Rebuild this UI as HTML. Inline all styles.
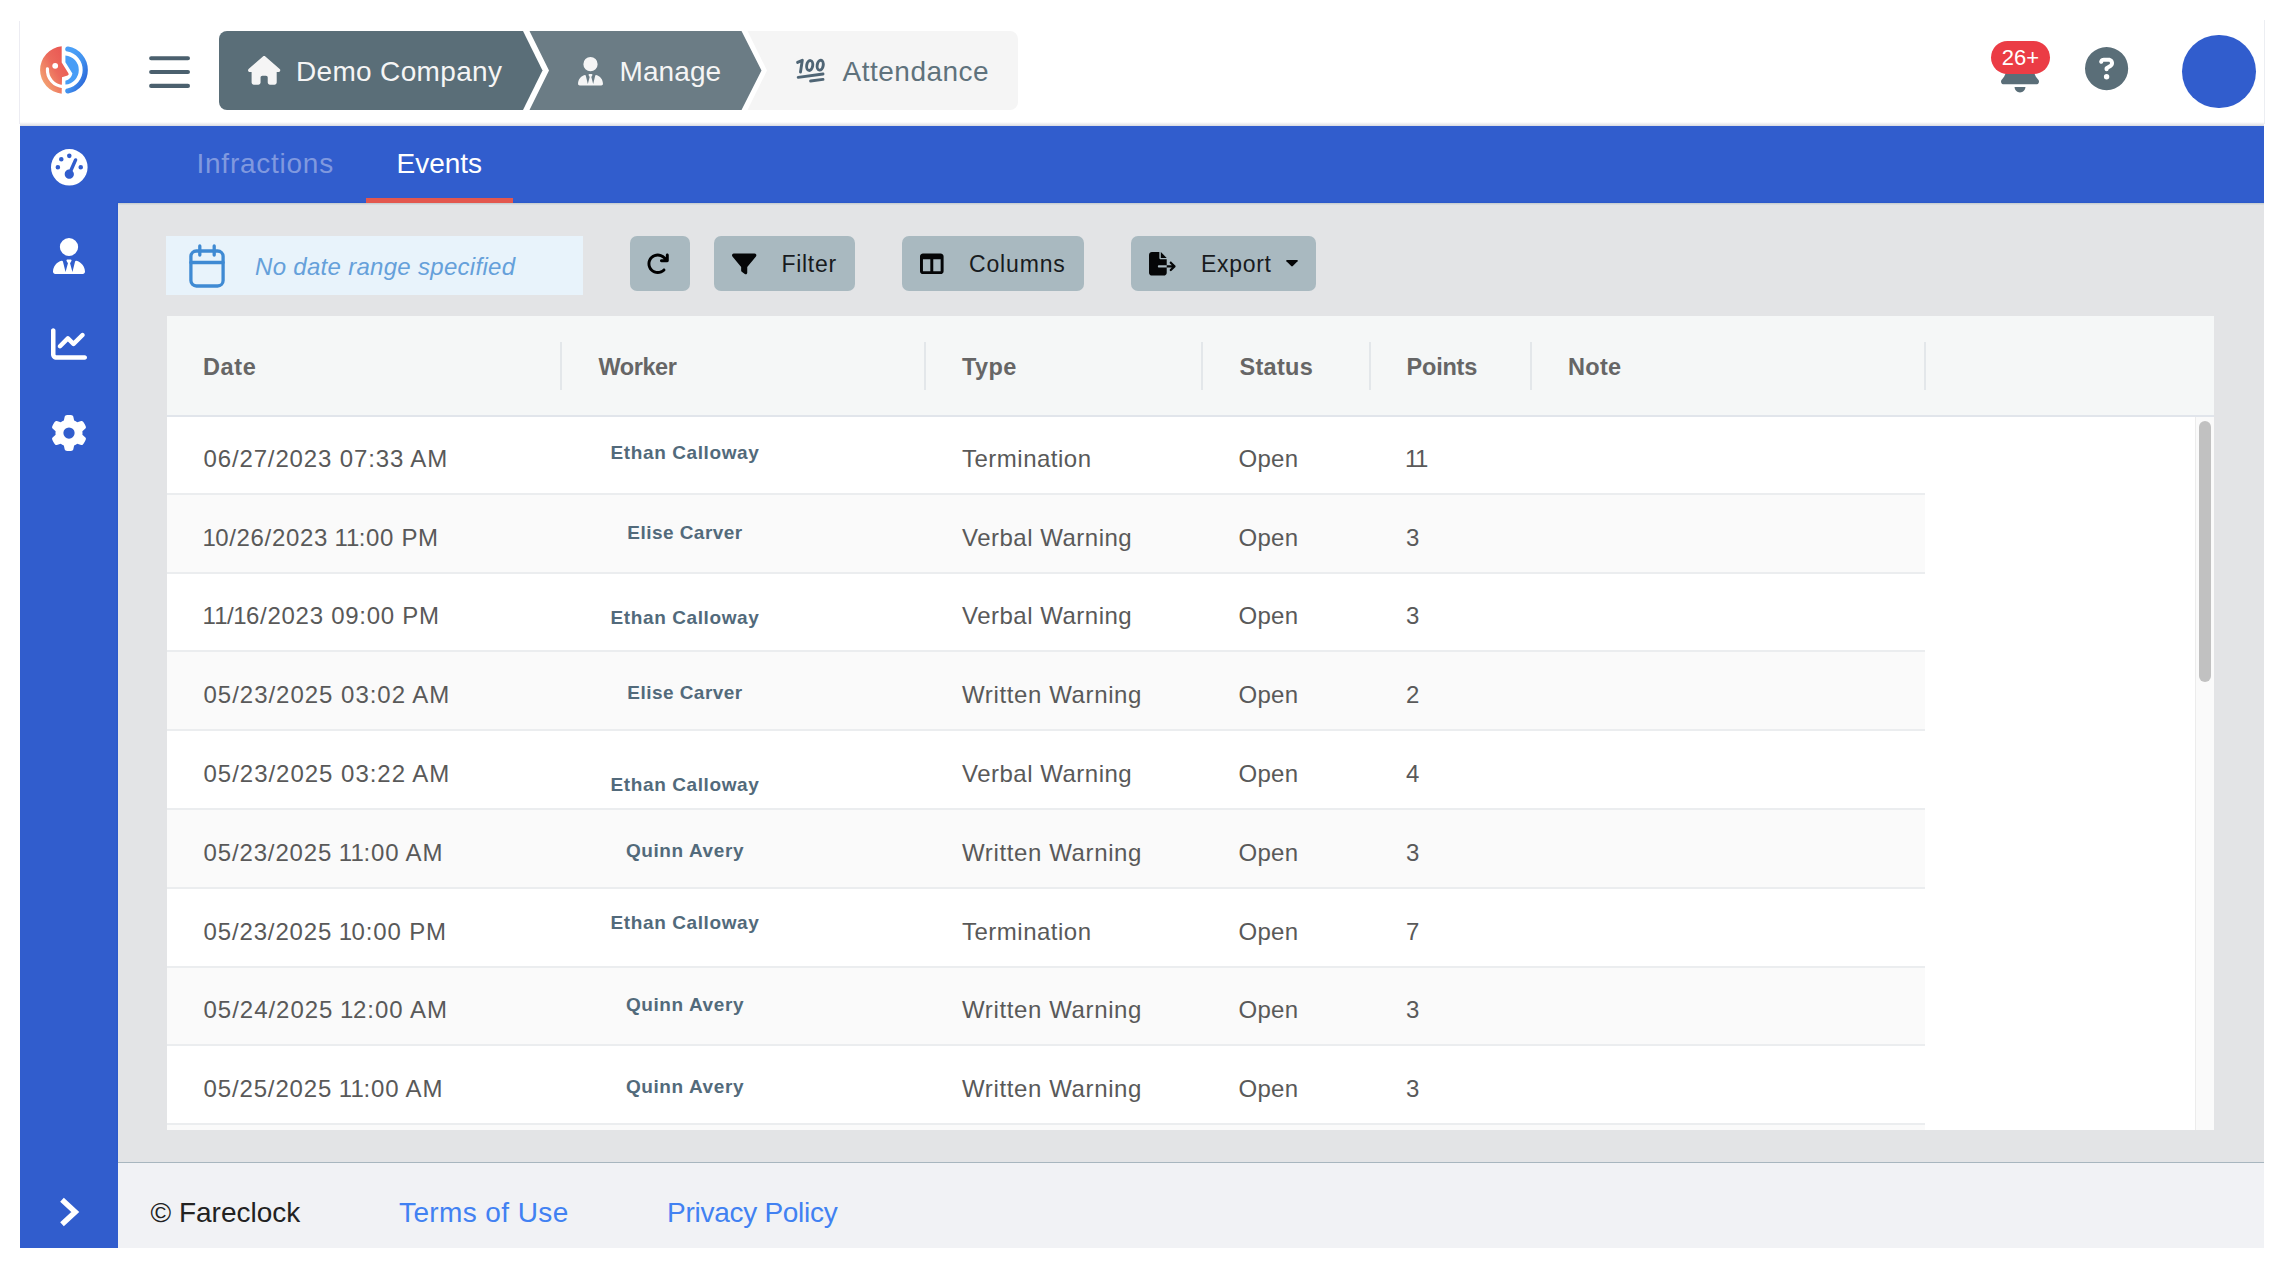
<!DOCTYPE html>
<html lang="en">
<head>
<meta charset="utf-8">
<title>Fareclock - Attendance Events</title>
<style>
*{box-sizing:border-box;margin:0;padding:0}
html,body{width:2288px;height:1268px;background:#fff;overflow:hidden}
body{position:relative;font-family:"Liberation Sans",sans-serif;color:#222}
.abs{position:absolute}
.t{position:absolute;white-space:nowrap;line-height:1}
svg{position:absolute;display:block;overflow:visible}
/* header */
#hdr{left:20px;top:20px;width:2244px;height:106px;background:#fff}
#hdrshadow{left:20px;top:122px;width:2244px;height:4px;background:linear-gradient(#fff,#d9dbe2)}
#edgeL{left:19px;top:21px;width:1px;height:103px;background:#ececf2}
#edgeR{left:2264px;top:20px;width:1px;height:104px;background:#eceef2}
/* sidebar + tabs */
#side{left:20px;top:126px;width:98px;height:1122px;background:#315dcd}
#tabs{left:118px;top:126px;width:2146px;height:77px;background:#315dcd}
#tabshadow{left:118px;top:203px;width:2146px;height:2px;background:linear-gradient(#c2c9cc,#dfe1e3)}
#tabdark{left:117px;top:201px;width:2147px;height:2px;background:linear-gradient(#315dcd,#2a58c9)}
#sidedark{left:116px;top:203px;width:2px;height:959px;background:linear-gradient(90deg,#315dcd,#2a58c9)}
#content{left:118px;top:203px;width:2146px;height:959px;background:#e3e4e6}
#footer{left:118px;top:1161.500px;width:2146px;height:86.500px;background:#f1f2f5;border-top:1.500px solid #a8b6bf}
.tab{font-size:28px}
.bc{font-size:28px}
#uline{left:366px;top:198px;width:147.200px;height:4.700px;background:#e3574e}
/* toolbar */
#daterange{left:166px;top:235.500px;width:417px;height:59.500px;background:#e8f3fb}
.btn{position:absolute;top:235.700px;height:55.500px;background:#a9b9c0;border-radius:7px}
.bt{font-size:23px;color:#181b1e;letter-spacing:.7px}
/* table */
#grid{left:167px;top:316.400px;width:2047px;height:813.600px;background:#fff}
#ghead{left:167px;top:316.400px;width:2047px;height:100.300px;background:#f5f7f7;border-bottom:2px solid #e1e5eb}
.hsep{position:absolute;top:342px;width:2px;height:48px;background:#e3e7ea}
.ht{font-size:23.5px;font-weight:bold;color:#666;top:355.700px}
.row{position:absolute;left:167px;width:1758px;border-bottom:2px solid #ebedef}
.row.alt{background:#fafafa}
.c{font-size:24px;color:#595959}
.n{margin:0 -1.400px 0 -1px}
.n2{margin:0 -2px 0 -1.400px}
.w{font-size:19px;font-weight:bold;color:#526a7b;width:300px;left:535px;text-align:center}
#sbtrack{left:2195px;top:417px;width:19px;height:713px;background:#fafafa;border-left:1px solid #ececec}
#sbthumb{left:2199px;top:421px;width:12px;height:261px;border-radius:6px;background:#c1c1c1}
.ft{font-size:28px;top:1199px}
</style>
</head>
<body>
<div id="hdr" class="abs"></div>
<div id="hdrshadow" class="abs"></div>
<div id="edgeL" class="abs"></div>
<div id="edgeR" class="abs"></div>
<div id="side" class="abs"></div>
<div id="tabs" class="abs"></div>
<div id="content" class="abs"></div>
<div id="tabshadow" class="abs"></div>
<div id="tabdark" class="abs"></div>
<div id="sidedark" class="abs"></div>
<div id="footer" class="abs"></div>

<!-- HEADER-CONTENT -->
<!-- logo -->
<svg style="left:39.5px;top:46px" width="48" height="48" viewBox="0 0 48 48">
  <defs>
    <linearGradient id="lg1" x1="0.9" y1="0.15" x2="0.1" y2="0.9">
      <stop offset="0" stop-color="#ea5753"/><stop offset="0.45" stop-color="#ec6a5c"/><stop offset="1" stop-color="#f4aa74"/>
    </linearGradient>
    <linearGradient id="lg2" x1="0.2" y1="0.1" x2="0.9" y2="0.9">
      <stop offset="0" stop-color="#4a9ff7"/><stop offset="0.5" stop-color="#4292ef"/><stop offset="1" stop-color="#2c68d8"/>
    </linearGradient>
  </defs>
  <path d="M21.700 0.300A23.800 23.800 0 0 0 21.700 47.700L22 31.200L27.600 29.400Q29.400 28.800 28.400 27.200L21.700 16.600Z" fill="url(#lg1)"/>
  <circle cx="15.200" cy="19.800" r="2.900" fill="#fff"/>
  <path d="M7.450 22.900A16.600 16.600 0 0 0 23 40.550" fill="none" stroke="#fff" stroke-width="3.200" stroke-linecap="round"/>
  <path d="M27.800 3.050A21.300 21.300 0 0 1 27.800 44.950" fill="none" stroke="url(#lg2)" stroke-width="5.200" stroke-linecap="round"/>
  <path d="M25.400 9.450A14.600 14.600 0 0 1 25.400 38.550L25.400 34.800Q31.200 33.400 32.400 27.600L25.400 16.200Z" fill="#489df6"/>
</svg>
<!-- hamburger -->
<svg style="left:149px;top:54.600px" width="42" height="34" viewBox="0 0 42 34">
  <path d="M2.150 3.200H38.950M2.150 17H38.950M2.150 30.900H38.950" stroke="#4b606e" stroke-width="4.100" stroke-linecap="round" fill="none"/>
</svg>
<!-- breadcrumbs -->
<svg style="left:219px;top:31px" width="800" height="79" viewBox="0 0 800 79">
  <path d="M8 0H304L323.500 39.500L304 79H8A8 8 0 0 1 0 71V8A8 8 0 0 1 8 0Z" fill="#5a6e78"/>
  <path d="M310.500 0H522.500L542.500 39.500L522.500 79H310.500L330 39.500Z" fill="#6b7c85"/>
  <path d="M528.500 0H791A8 8 0 0 1 799 8V71A8 8 0 0 1 791 79H528.500L548 39.500Z" fill="#f5f5f5"/>
</svg>
<svg style="left:247.700px;top:56.300px" width="32.300" height="28.700" viewBox="0 0 576 512"><path fill="#f5f5f5" d="M575.800 255.500c0 18-15 32.100-32 32.100h-32l.7 160.200c0 2.700-.2 5.400-.5 8.100V472c0 22.100-17.900 40-40 40H456c-1.100 0-2.200 0-3.300-.1c-1.400 .1-2.800 .1-4.200 .1H416 392c-22.100 0-40-17.900-40-40V448 384c0-17.700-14.300-32-32-32H256c-17.700 0-32 14.300-32 32v64 24c0 22.100-17.900 40-40 40H160 128.100c-1.500 0-3-.1-4.500-.2c-1.200 .1-2.400 .2-3.600 .2H104c-22.100 0-40-17.900-40-40V360c0-.9 0-1.900 .1-2.800V287.600H32c-18 0-32-14-32-32.100c0-9 3-17 10-24L266.400 8c7-7 15-8 22-8s15 2 21 7L564.800 231.500c8 7 12 15 11 24z"/></svg>
<div class="t bc" style="left:296px;top:57.500px;color:#f5f5f5;letter-spacing:.33px">Demo Company</div>
<svg style="left:578px;top:57px" width="25" height="28.500" viewBox="0 0 448 512"><path fill="#f5f5f5" d="M224 256A128 128 0 1 1 224 0a128 128 0 1 1 0 256zM209.100 359.200l-18.600-31c-6.400-10.700 1.300-24.200 13.700-24.200H224h19.700c12.400 0 20.100 13.600 13.700 24.200l-18.600 31 33.400 123.900 36-146.900c2-8.100 9.800-13.400 17.900-11.300c70.100 17.600 121.900 81 121.900 156.400c0 17-13.800 30.700-30.700 30.700H285.500c-2.100 0-4-.4-5.800-1.100l.3 1.100H168l.3-1.100c-1.800 .7-3.800 1.100-5.800 1.100H30.700C13.800 512 0 498.200 0 481.300c0-75.500 51.900-138.900 121.900-156.400c8.100-2 15.900 3.300 17.900 11.300l36 146.900 33.400-123.900z"/></svg>
<div class="t bc" style="left:619.500px;top:57.500px;color:#f5f5f5;letter-spacing:.1px">Manage</div>
<!-- 100 icon -->
<svg style="left:785px;top:50px" width="50" height="42" viewBox="0 0 50 42">
  <g fill="none" stroke="#4f6575" stroke-width="2.900" stroke-linecap="round" stroke-linejoin="round">
    <path d="M12.600 12.400L17.300 10.200L15.500 22"/>
    <ellipse cx="24.700" cy="15.500" rx="3" ry="5" transform="rotate(9 24.700 15.500)"/>
    <ellipse cx="35.200" cy="15.200" rx="3" ry="5" transform="rotate(9 35.200 15.200)"/>
    <path d="M13.200 27.400L38 24"/>
    <path d="M25.600 31L38 29.400"/>
  </g>
</svg>
<div class="t bc" style="left:842.500px;top:57.500px;color:#5f727c;letter-spacing:.5px">Attendance</div>
<!-- bell + badge -->
<svg style="left:2001px;top:49.300px" width="38" height="43.400" viewBox="0 0 448 512"><path fill="#5a6e78" d="M224 0c-17.700 0-32 14.300-32 32V51.200C119 66 64 130.600 64 208v18.800c0 47-17.300 92.400-48.500 127.600l-7.400 8.300c-8.400 9.400-10.400 22.900-5.300 34.400S19.400 416 32 416H416c12.600 0 24-7.400 29.200-18.900s3.100-25-5.300-34.400l-7.400-8.300C401.300 319.200 384 273.900 384 226.800V208c0-77.400-55-142-128-156.800V32c0-17.700-14.300-32-32-32zm45.300 493.300c12-12 18.700-28.300 18.700-45.300H224 160c0 17 6.700 33.300 18.700 45.300s28.300 18.700 45.300 18.700s33.300-6.700 45.300-18.700z"/></svg>
<div class="abs" style="left:1991px;top:41px;width:58.600px;height:32.500px;border-radius:16.500px;background:#eb3c45"></div>
<div class="t" style="left:1991px;top:47px;width:59px;text-align:center;font-size:22px;color:#fff">26+</div>
<!-- help -->
<svg style="left:2085.200px;top:47.300px" width="43.200" height="43.200" viewBox="0 0 512 512"><path fill="#5a6e78" d="M256 512A256 256 0 1 0 256 0a256 256 0 1 0 0 512zM169.800 165.300c7.900-22.300 29.100-37.300 52.800-37.300h58.300c34.900 0 63.100 28.300 63.100 63.100c0 22.600-12.100 43.500-31.700 54.800L280 264.400c-.2 13-10.900 23.600-24 23.600c-13.300 0-24-10.700-24-24V250.500c0-8.600 4.600-16.500 12.100-20.800l44.300-25.400c4.700-2.700 7.600-7.700 7.600-13.100c0-8.400-6.800-15.100-15.100-15.100H222.600c-3.400 0-6.400 2.100-7.500 5.300l-.4 1.200c-4.400 12.500-18.200 19-30.600 14.600s-19-18.200-14.600-30.600l.4-1.200zM224 352a32 32 0 1 1 64 0 32 32 0 1 1 -64 0z"/></svg>
<!-- avatar -->
<div class="abs" style="left:2182px;top:34.600px;width:73.800px;height:73.800px;border-radius:50%;background:#315dcd"></div>


<!-- SIDEBAR-ICONS -->
<svg style="left:50.700px;top:148.900px" width="36.600" height="36.600" viewBox="0 0 512 512"><path fill="#fff" d="M0 256a256 256 0 1 1 512 0A256 256 0 1 1 0 256zM288 96a32 32 0 1 0 -64 0 32 32 0 1 0 64 0zM256 416c35.300 0 64-28.700 64-64c0-17.400-6.900-33.100-18.100-44.600L366 161.700c5.300-12.100-.2-26.300-12.300-31.600s-26.300 .2-31.600 12.300L257.900 288c-.6 0-1.300 0-1.900 0c-35.300 0-64 28.700-64 64s28.700 64 64 64zM176 144a32 32 0 1 0 -64 0 32 32 0 1 0 64 0zM96 288a32 32 0 1 0 0-64 32 32 0 1 0 0 64zm352-32a32 32 0 1 0 -64 0 32 32 0 1 0 64 0z"/></svg>
<svg style="left:53px;top:237.500px" width="32" height="36" viewBox="0 0 448 512" preserveAspectRatio="none"><path fill="#fff" d="M224 256A128 128 0 1 1 224 0a128 128 0 1 1 0 256zM209.100 359.200l-18.600-31c-6.400-10.700 1.300-24.200 13.700-24.200H224h19.700c12.400 0 20.100 13.600 13.700 24.200l-18.600 31 33.400 123.900 36-146.900c2-8.100 9.800-13.400 17.900-11.300c70.100 17.600 121.900 81 121.900 156.400c0 17-13.800 30.700-30.700 30.700H285.500c-2.100 0-4-.4-5.800-1.100l.3 1.100H168l.3-1.100c-1.800 .7-3.800 1.100-5.800 1.100H30.700C13.800 512 0 498.200 0 481.300c0-75.500 51.900-138.900 121.900-156.400c8.100-2 15.900 3.300 17.900 11.300l36 146.900 33.400-123.900z"/></svg>
<svg style="left:51px;top:326px" width="36" height="36" viewBox="0 0 512 512"><path fill="#fff" d="M64 64c0-17.700-14.300-32-32-32S0 46.300 0 64V400c0 44.200 35.800 80 80 80H480c17.700 0 32-14.300 32-32s-14.300-32-32-32H80c-8.800 0-16-7.200-16-16V64zm406.600 86.600c12.500-12.500 12.500-32.800 0-45.300s-32.800-12.500-45.300 0L320 210.700l-57.400-57.400c-12.500-12.500-32.800-12.500-45.300 0l-112 112c-12.500 12.500-12.500 32.800 0 45.300s32.800 12.500 45.300 0L240 221.300l57.400 57.400c12.500 12.500 32.800 12.500 45.300 0l128-128z"/></svg>
<svg style="left:51px;top:414.500px" width="36" height="36" viewBox="0 0 512 512"><path fill="#fff" d="M495.900 166.600c3.200 8.700 .5 18.400-6.400 24.600l-43.300 39.400c1.100 8.300 1.700 16.800 1.700 25.400s-.6 17.100-1.700 25.400l43.300 39.400c6.900 6.200 9.600 15.900 6.400 24.600c-4.400 11.900-9.700 23.300-15.800 34.300l-4.700 8.100c-6.600 11-14 21.400-22.100 31.200c-5.900 7.200-15.700 9.600-24.500 6.800l-55.700-17.700c-13.400 10.300-28.200 18.900-44 25.400l-12.500 57.100c-2 9.100-9 16.300-18.200 17.800c-13.800 2.300-28 3.500-42.500 3.500s-28.700-1.200-42.500-3.500c-9.200-1.500-16.200-8.700-18.200-17.800l-12.500-57.100c-15.800-6.500-30.600-15.100-44-25.400L83.100 425.900c-8.800 2.800-18.600 .3-24.500-6.800c-8.100-9.800-15.500-20.200-22.100-31.200l-4.700-8.100c-6.100-11-11.400-22.400-15.800-34.300c-3.200-8.700-.5-18.400 6.400-24.600l43.300-39.400C64.600 273.100 64 264.600 64 256s.6-17.100 1.700-25.400L22.400 191.200c-6.900-6.200-9.600-15.900-6.400-24.600c4.400-11.900 9.700-23.300 15.800-34.300l4.700-8.100c6.600-11 14-21.400 22.100-31.200c5.900-7.200 15.700-9.600 24.500-6.800l55.700 17.700c13.400-10.300 28.200-18.900 44-25.400l12.500-57.100c2-9.100 9-16.300 18.200-17.800C227.300 1.200 241.500 0 256 0s28.700 1.200 42.500 3.500c9.200 1.500 16.200 8.700 18.200 17.800l12.500 57.100c15.800 6.500 30.600 15.100 44 25.400l55.700-17.700c8.800-2.800 18.600-.3 24.500 6.800c8.100 9.800 15.500 20.200 22.100 31.200l4.700 8.100c6.100 11 11.400 22.400 15.800 34.300zM256 336a80 80 0 1 0 0-160 80 80 0 1 0 0 160z"/></svg>
<svg style="left:58px;top:1195px" width="26" height="34" viewBox="0 0 26 34"><path d="M4 4.800L17.270 17L4 29.200" fill="none" stroke="#fff" stroke-width="5.400" stroke-linecap="butt" stroke-linejoin="miter"/></svg>


<!-- TABS -->
<div class="t tab" style="left:196.500px;top:150px;color:#8099df;letter-spacing:.75px">Infractions</div>
<div class="t tab" style="left:396.500px;top:150px;color:#fff">Events</div>
<div id="uline" class="abs"></div>

<!-- TOOLBAR -->
<div id="daterange" class="abs"></div>
<!-- calendar icon -->
<svg style="left:189px;top:244px" width="36" height="44" viewBox="0 0 36 44">
  <g fill="none" stroke="#3f8ad3" stroke-width="3.300" stroke-linecap="round" stroke-linejoin="round">
    <rect x="1.900" y="7" width="32.200" height="35" rx="5.500"/>
    <path d="M1.900 18.500H34.100M10.800 2V11M25.200 2V11"/>
  </g>
</svg>
<div class="t" style="left:255px;top:255px;font-size:24px;font-style:italic;color:#65a0da;letter-spacing:.3px">No date range specified</div>
<!-- buttons -->
<div class="btn" style="left:629.500px;width:60.500px"></div>
<svg style="left:645.700px;top:252px" width="23.500" height="23.500" viewBox="0 0 512 512"><path fill="#000" d="M386.300 160H336c-17.700 0-32 14.300-32 32s14.300 32 32 32H464c17.700 0 32-14.300 32-32V64c0-17.700-14.300-32-32-32s-32 14.300-32 32v51.200L414.400 97.600c-87.500-87.500-229.300-87.500-316.800 0s-87.500 229.300 0 316.800s229.300 87.500 316.800 0c12.500-12.500 12.500-32.800 0-45.300s-32.800-12.500-45.300 0c-62.500 62.500-163.800 62.500-226.300 0s-62.500-163.800 0-226.300s163.800-62.500 226.300 0L386.300 160z"/></svg>
<div class="btn" style="left:714px;width:140.500px"></div>
<svg style="left:731.700px;top:251.600px" width="24.400" height="23.800" viewBox="0 0 512 512" preserveAspectRatio="none"><path fill="#050607" d="M3.900 54.900C10.500 40.900 24.500 32 40 32H472c15.500 0 29.500 8.900 36.100 22.900s4.600 30.500-5.200 42.500L320 320.900V448c0 12.100-6.800 23.200-17.700 28.600s-23.800 4.300-33.500-3l-64-48c-8.100-6-12.800-15.500-12.800-25.600V320.900L9 97.300C-.7 85.400-2.800 68.800 3.900 54.900z"/></svg>
<div class="t bt" style="left:781.500px;top:253px">Filter</div>
<div class="btn" style="left:902px;width:182px"></div>
<svg style="left:919.500px;top:252px" width="23.600" height="23.600" viewBox="0 0 512 512"><path fill="#050607" d="M0 96C0 60.700 28.700 32 64 32H448c35.300 0 64 28.700 64 64V416c0 35.300-28.700 64-64 64H64c-35.300 0-64-28.700-64-64V96zm64 64V416H224V160H64zm384 0H288V416H448V160z"/></svg>
<div class="t bt" style="left:969px;top:253px;letter-spacing:.85px">Columns</div>
<div class="btn" style="left:1131px;width:185px"></div>
<svg style="left:1148.800px;top:251.500px" width="26.600" height="23.600" viewBox="0 0 576 512"><path fill="#050607" d="M0 64C0 28.700 28.700 0 64 0H224V128c0 17.700 14.300 32 32 32H384V288H216c-13.300 0-24 10.700-24 24s10.700 24 24 24H384V448c0 35.300-28.700 64-64 64H64c-35.300 0-64-28.700-64-64V64zM384 336V288H494.100l-39-39c-9.400-9.400-9.400-24.600 0-33.900s24.600-9.400 33.900 0l80 80c9.400 9.400 9.400 24.600 0 33.900l-80 80c-9.400 9.400-24.600 9.400-33.900 0s-9.400-24.600 0-33.900l39-39H384zm0-208H256V0L384 128z"/></svg>
<div class="t bt" style="left:1201px;top:253px">Export</div>
<svg style="left:1285.800px;top:259.600px" width="12" height="6.500" viewBox="0 0 12 6.500"><path fill="#050607" d="M0.800 0H11.200Q12.400 0.300 11.600 1.300L6.800 6.100Q6 6.800 5.200 6.100L0.400 1.300Q-0.400 0.300 0.800 0Z"/></svg>


<!-- GRID -->
<div id="grid" class="abs"></div>
<div id="ghead" class="abs"></div>
<div class="hsep" style="left:559.5px"></div>
<div class="hsep" style="left:924px"></div>
<div class="hsep" style="left:1201px"></div>
<div class="hsep" style="left:1368.5px"></div>
<div class="hsep" style="left:1529.8px"></div>
<div class="hsep" style="left:1923.5px"></div>
<div class="t ht" style="left:203px;letter-spacing:0.6px">Date</div>
<div class="t ht" style="left:598.5px;letter-spacing:-0.45px">Worker</div>
<div class="t ht" style="left:962px;letter-spacing:0.4px">Type</div>
<div class="t ht" style="left:1239.5px;letter-spacing:0.3px">Status</div>
<div class="t ht" style="left:1406.5px;letter-spacing:-0.2px">Points</div>
<div class="t ht" style="left:1568px;letter-spacing:0.3px">Note</div>
<div class="row" style="top:416.00px;height:78.80px"></div>
<div class="t c" style="left:203.5px;top:446.80px;letter-spacing:0.86px">06/27/2023 07:33 AM</div>
<div class="t w" style="top:442.50px;letter-spacing:0.6px">Ethan Calloway</div>
<div class="t c" style="left:962px;top:446.80px;letter-spacing:0.5px">Termination</div>
<div class="t c" style="left:1238.5px;top:446.80px;letter-spacing:.3px">Open</div>
<div class="t c" style="left:1406.3px;top:446.80px"><span class="n2">1</span><span class="n2">1</span></div>
<div class="row alt" style="top:494.80px;height:78.80px"></div>
<div class="t c" style="left:203.5px;top:525.60px;letter-spacing:0.68px"><span class="n">1</span>0/26/2023 <span class="n">1</span><span class="n">1</span>:00 PM</div>
<div class="t w" style="top:523.40px;letter-spacing:0.45px">Elise Carver</div>
<div class="t c" style="left:962px;top:525.60px;letter-spacing:0.5px">Verbal Warning</div>
<div class="t c" style="left:1238.5px;top:525.60px;letter-spacing:.3px">Open</div>
<div class="t c" style="left:1406px;top:525.60px">3</div>
<div class="row" style="top:573.60px;height:78.80px"></div>
<div class="t c" style="left:203.5px;top:604.40px;letter-spacing:0.73px"><span class="n">1</span><span class="n">1</span>/<span class="n">1</span>6/2023 09:00 PM</div>
<div class="t w" style="top:607.90px;letter-spacing:0.6px">Ethan Calloway</div>
<div class="t c" style="left:962px;top:604.40px;letter-spacing:0.5px">Verbal Warning</div>
<div class="t c" style="left:1238.5px;top:604.40px;letter-spacing:.3px">Open</div>
<div class="t c" style="left:1406px;top:604.40px">3</div>
<div class="row alt" style="top:652.40px;height:78.80px"></div>
<div class="t c" style="left:203.5px;top:683.20px;letter-spacing:0.98px">05/23/2025 03:02 AM</div>
<div class="t w" style="top:682.60px;letter-spacing:0.45px">Elise Carver</div>
<div class="t c" style="left:962px;top:683.20px;letter-spacing:0.62px">Written Warning</div>
<div class="t c" style="left:1238.5px;top:683.20px;letter-spacing:.3px">Open</div>
<div class="t c" style="left:1406px;top:683.20px">2</div>
<div class="row" style="top:731.20px;height:78.80px"></div>
<div class="t c" style="left:203.5px;top:762.00px;letter-spacing:0.98px">05/23/2025 03:22 AM</div>
<div class="t w" style="top:774.50px;letter-spacing:0.6px">Ethan Calloway</div>
<div class="t c" style="left:962px;top:762.00px;letter-spacing:0.5px">Verbal Warning</div>
<div class="t c" style="left:1238.5px;top:762.00px;letter-spacing:.3px">Open</div>
<div class="t c" style="left:1406px;top:762.00px">4</div>
<div class="row alt" style="top:810.00px;height:78.80px"></div>
<div class="t c" style="left:203.5px;top:840.80px;letter-spacing:0.86px">05/23/2025 <span class="n">1</span><span class="n">1</span>:00 AM</div>
<div class="t w" style="top:840.60px;letter-spacing:0.6px">Quinn Avery</div>
<div class="t c" style="left:962px;top:840.80px;letter-spacing:0.62px">Written Warning</div>
<div class="t c" style="left:1238.5px;top:840.80px;letter-spacing:.3px">Open</div>
<div class="t c" style="left:1406px;top:840.80px">3</div>
<div class="row" style="top:888.80px;height:78.80px"></div>
<div class="t c" style="left:203.5px;top:919.60px;letter-spacing:0.86px">05/23/2025 <span class="n">1</span>0:00 PM</div>
<div class="t w" style="top:913.00px;letter-spacing:0.6px">Ethan Calloway</div>
<div class="t c" style="left:962px;top:919.60px;letter-spacing:0.5px">Termination</div>
<div class="t c" style="left:1238.5px;top:919.60px;letter-spacing:.3px">Open</div>
<div class="t c" style="left:1406px;top:919.60px">7</div>
<div class="row alt" style="top:967.60px;height:78.80px"></div>
<div class="t c" style="left:203.5px;top:998.40px;letter-spacing:0.98px">05/24/2025 <span class="n">1</span>2:00 AM</div>
<div class="t w" style="top:995.20px;letter-spacing:0.6px">Quinn Avery</div>
<div class="t c" style="left:962px;top:998.40px;letter-spacing:0.62px">Written Warning</div>
<div class="t c" style="left:1238.5px;top:998.40px;letter-spacing:.3px">Open</div>
<div class="t c" style="left:1406px;top:998.40px">3</div>
<div class="row" style="top:1046.40px;height:78.80px"></div>
<div class="t c" style="left:203.5px;top:1077.20px;letter-spacing:0.86px">05/25/2025 <span class="n">1</span><span class="n">1</span>:00 AM</div>
<div class="t w" style="top:1077.00px;letter-spacing:0.6px">Quinn Avery</div>
<div class="t c" style="left:962px;top:1077.20px;letter-spacing:0.62px">Written Warning</div>
<div class="t c" style="left:1238.5px;top:1077.20px;letter-spacing:.3px">Open</div>
<div class="t c" style="left:1406px;top:1077.20px">3</div>
<div class="row alt" style="top:1125.20px;height:4.80px;border-bottom:none"></div>
<div id="sbtrack" class="abs"></div>
<div id="sbthumb" class="abs"></div>

<!-- FOOTER -->
<div class="t ft" style="left:150.500px;color:#222">© Fareclock</div>
<div class="t ft" style="left:399px;color:#4181f2;letter-spacing:.39px">Terms of Use</div>
<div class="t ft" style="left:667px;color:#4181f2;letter-spacing:-.27px">Privacy Policy</div>
</body>
</html>
